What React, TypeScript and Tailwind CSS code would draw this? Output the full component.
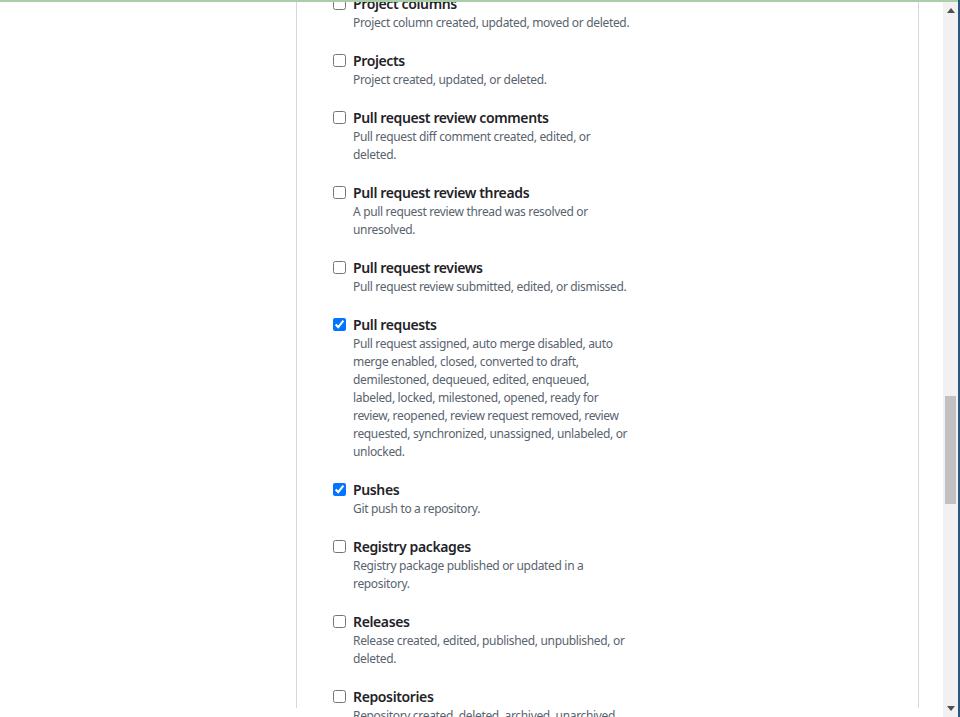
import React from 'react';

type Event = { name: string; description: string; checked?: boolean };

const events: Event[] = [
  { name: 'Project columns', description: 'Project column created, updated, moved or deleted.' },
  { name: 'Projects', description: 'Project created, updated, or deleted.' },
  { name: 'Pull request review comments', description: 'Pull request diff comment created, edited, or deleted.' },
  { name: 'Pull request review threads', description: 'A pull request review thread was resolved or unresolved.' },
  { name: 'Pull request reviews', description: 'Pull request review submitted, edited, or dismissed.' },
  {
    name: 'Pull requests',
    checked: true,
    description:
      'Pull request assigned, auto merge disabled, auto merge enabled, closed, converted to draft, demilestoned, dequeued, edited, enqueued, labeled, locked, milestoned, opened, ready for review, reopened, review request removed, review requested, synchronized, unassigned, unlabeled, or unlocked.',
  },
  { name: 'Pushes', checked: true, description: 'Git push to a repository.' },
  { name: 'Registry packages', description: 'Registry package published or updated in a repository.' },
  { name: 'Releases', description: 'Release created, edited, published, unpublished, or deleted.' },
  {
    name: 'Repositories',
    description: 'Repository created, deleted, archived, unarchived, publicized, privatized, edited, renamed, or transferred.',
  },
];

function EventOption({ event }: { event: Event }) {
  return (
    <label className="flex items-start gap-[7px]">
      <input type="checkbox" defaultChecked={event.checked} className="mt-[4px] h-[13px] w-[13px] shrink-0" />
      <div>
        <div className="text-[14px] leading-[21px] font-semibold tracking-[-0.37px] text-[#1f2328]">{event.name}</div>
        <p className="max-w-[278px] text-[12px] leading-[18px] tracking-[-0.33px] text-[#59636e]">{event.description}</p>
      </div>
    </label>
  );
}

function Scrollbar() {
  return (
    <div className="flex w-[15px] flex-col bg-[#f1f1f1]">
      <div className="flex h-[17px] items-center justify-center">
        <svg width="8" height="5" viewBox="0 0 8 5">
          <path d="M4 0 L8 5 L0 5 Z" fill="#505050" />
        </svg>
      </div>
      <div className="flex-1 pt-[377px]">
        <div className="mx-[2px] h-[108px] bg-[#c1c1c1]" />
      </div>
      <div className="flex h-[17px] items-center justify-center">
        <svg width="8" height="5" viewBox="0 0 8 5">
          <path d="M0 0 L8 0 L4 5 Z" fill="#505050" />
        </svg>
      </div>
    </div>
  );
}

export default function App() {
  return (
    <div className="flex h-[717px] w-[960px] overflow-hidden bg-white font-['Noto_Sans',sans-serif]">
      <div className="flex min-w-0 flex-1 flex-col">
        <div className="h-[2px] bg-[#a8cfa8]" />
        <div className="flex min-h-0 flex-1">
          <main className="min-w-0 flex-1 overflow-hidden">
            <div className="ml-[296px] h-full w-[623px] border-x border-[#d1d9e0]">
              {/* Webhook events list */}
              <div className="-mt-[9px] flex flex-col gap-[18px] pl-[36px]">
                {events.map((e) => (
                  <EventOption key={e.name} event={e} />
                ))}
              </div>
            </div>
          </main>
          <Scrollbar />
        </div>
      </div>
      <div className="w-[2px] bg-[#2b5782]" />
    </div>
  );
}
